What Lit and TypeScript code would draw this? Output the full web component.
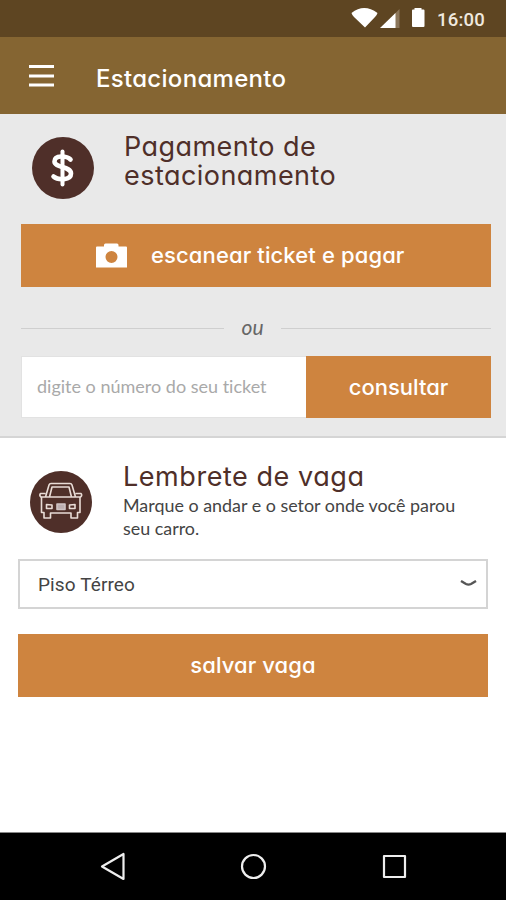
import { LitElement, html, css } from "lit";
import { customElement } from "lit/decorators.js";

@customElement("app-root")
export class AppRoot extends LitElement {
  static styles = css`
    :host { display: flex; flex-direction: column; height: 900px; width: 506px; overflow: hidden; background: #fff; font-family: Lato, sans-serif; font-variant-ligatures: none; }
    * { box-sizing: border-box; }
    svg { display: block; flex: none; }
    span, h1, h2 { white-space: nowrap; }
    h1, h2, p { margin: 0; }
    button { border: 0; padding: 0; margin: 0; background: #ce843f; color: #fff; display: flex; align-items: center; }
    .round { font-family: Inter, sans-serif; font-feature-settings: "cv11"; font-weight: 500; }
    .status { height: 37px; background: #5e4522; display: flex; align-items: center; padding-left: 351px; flex: none; }
    .clock { font: 500 18.5px/20px Roboto, sans-serif; color: #f0e9df; margin: 3px 0 0 10px; letter-spacing: 0.2px; }
    .bar { height: 77px; background: #856532; display: flex; align-items: center; padding-left: 29px; flex: none; color: #fff; }
    .bar h1 { font-size: 24px; line-height: 30px; margin: 6px 0 0 42px; letter-spacing: 0.3px; }
    .pay { height: 324px; background: #e9e9e9; border-bottom: 2px solid #d5d5d5; padding: 18px 15px 0 21px; flex: none; }
    .payhead { display: flex; height: 92px; }
    .disc { width: 62px; height: 62px; border-radius: 50%; background: #4f2f29; flex: none; display: flex; align-items: center; justify-content: center; }
    .payhead .disc { margin: 5px 30px 0 11px; }
    h2.round { color: #4f2f29; font-size: 27px; line-height: 29px; font-weight: 400; letter-spacing: 0.45px; }
    h2.lem { letter-spacing: 0.55px; }
    h2 span { display: block; height: 29px; }
    .scan { width: 470px; height: 63px; padding-left: 75px; }
    .scan .round { font-size: 22px; margin: -2px 0 0 24px; letter-spacing: 0.12px; }
    .or { display: flex; align-items: center; height: 30px; margin-top: 26px; color: #666; }
    .or i { height: 1px; background: #cfcfcf; width: 203px; }
    .or i:last-child { width: 210px; }
    .or span { font-size: 21px; font-style: italic; flex: 1; text-align: center; margin-top: -4px; }
    .query { display: flex; margin-top: 13px; height: 62px; }
    .input { width: 285px; background: #fff; display: flex; align-items: center; padding: 0 0 2px 15px; color: #a9a9a9; font-size: 18px; border: 1px solid #e2e2e2; border-right: 0; }
    .query button { flex: 1; justify-content: center; font-size: 22px; }
    .spot { flex: 1; padding: 24px 18px 0 18px; }
    .spothead { display: flex; height: 97px; }
    .spothead .disc { margin: 9px 31px 0 12px; }
    .spothead p { color: #444; font-size: 17.9px; line-height: 22.5px; margin-top: 3px; }
    .select { height: 50px; border: 2px solid #d4d4d4; display: flex; align-items: center; justify-content: space-between; padding: 0 9px 0 18px; font: 400 19px Roboto, sans-serif; color: #444; }
    .select span { letter-spacing: 0.12px; }
    .save { height: 63px; width: 470px; margin-top: 25px; padding-bottom: 1px; justify-content: center; font-size: 22px; letter-spacing: 0.1px; }
    .nav { height: 68px; background: #000; border-top: 1px solid #888; display: flex; align-items: center; padding-left: 100px; flex: none; }
  `;

  render() {
    return html`
      <div class="status">
        <svg width="76" height="22" viewBox="0 0 76 22">
          <path d="M0.500 5Q13-5 26.500 5Q26 7 24 9L14 19.500L3 9Q1 7 0.500 5Z" fill="#fff" />
          <path d="M48.500 1v19h-5V6z" fill="#8b765a" />
          <path d="M44.500 5v15H29z" fill="#fff" />
          <path d="M61 2.500Q61 1.500 62 1.500H63.500V0H70.500V1.500H72.500Q73.500 1.500 73.500 2.500V18Q73.500 19 72.500 19H62Q61 19 61 18Z" fill="#fff" />
        </svg>
        <span class="clock">16:00</span>
      </div>
      <header class="bar">
        <svg width="25" height="22" viewBox="0 0 25 22"><path d="M0 1.500h25M0 11h25M0 20h25" stroke="#fff" stroke-width="2.800" /></svg>
        <h1 class="round">Estacionamento</h1>
      </header>
      <section class="pay">
        <div class="payhead">
          <div class="disc">
            <svg width="30" height="42" viewBox="0 0 30 42" fill="none" stroke="#fff" stroke-width="4.600" stroke-linecap="round">
              <path d="M14.500 4.500v33" stroke-width="4" /><path d="M22.500 12.500C19 9 6.500 7.500 6.500 14.500c0 6.500 16.500 4.500 16.500 12 0 7-13 7-17.500 3" />
            </svg>
          </div>
          <h2 class="round"><span>Pagamento de</span><span>estacionamento</span></h2>
        </div>
        <button class="scan">
          <svg width="31" height="25" viewBox="0 0 31 25"><path fill="#fff" fill-rule="evenodd" d="M0 4.500Q0 3.500 1 3.500H8V2Q8 0.500 9.500 0.500H21Q22.500 0.500 22.500 2V3.500H30Q31 3.500 31 4.500V24.500H0ZM15.500 8a6 6 0 1 0 0 12 6 6 0 0 0 0-12Z" /></svg>
          <span class="round">escanear ticket e pagar</span>
        </button>
        <div class="or"><i></i><span>ou</span><i></i></div>
        <div class="query">
          <div class="input"><span>digite o número do seu ticket</span></div>
          <button><span class="round">consultar</span></button>
        </div>
      </section>
      <section class="spot">
        <div class="spothead">
          <div class="disc">
            <svg width="46" height="40" viewBox="0 0 46 40" fill="none" stroke="#e9dcd6" stroke-width="1.600" stroke-linejoin="round">
              <path d="M7.500 15L11 3Q11.500 1.500 13 1.500H32Q33.500 1.500 34 3L37.500 15M11.500 15L14 5H31L33.500 15M7.500 11.500L2.500 11.500Q1 13.500 3 15H42.500Q44.500 13.500 43 11.500H37.500" />
              <path d="M3.500 15V30.500H6V36H12.500V31H33V36H39.500V30.500H42V15" />
              <path d="M8.500 22.500L14 23V26.500H8.500ZM37 22.500L31.500 23V26.500H37Z" />
              <path d="M19 22h8v5.500h-8z" fill="#bcaeb0" stroke="#cfc3c4" />
            </svg>
          </div>
          <div>
            <h2 class="round lem">Lembrete de vaga</h2>
            <p><span>Marque o andar e o setor onde você parou</span><br /><span>seu carro.</span></p>
          </div>
        </div>
        <div class="select"><span>Piso Térreo</span>
          <svg width="17" height="9" viewBox="0 0 17 9"><path d="M1 1L6 4Q8.500 5.200 11 4L16 1" fill="none" stroke="#555" stroke-width="2.400" /></svg>
        </div>
        <button class="save round"><span>salvar vaga</span></button>
      </section>
      <footer class="nav">
        <svg width="308" height="30" viewBox="0 0 308 30" fill="none" stroke="#eee" stroke-width="2.200" stroke-linejoin="round">
          <path d="M23.500 2V27L2 14.500Z" /><circle cx="153.500" cy="14.500" r="11.500" /><path d="M284 4h21v21h-21z" />
        </svg>
      </footer>
    `;
  }
}
